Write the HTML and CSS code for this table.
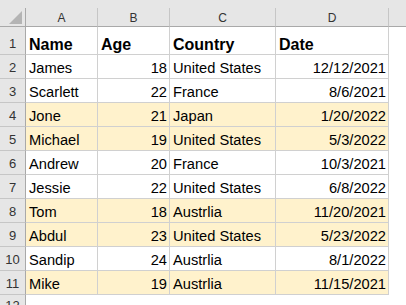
FILE: index.html
```html
<!DOCTYPE html>
<html>
<head>
<meta charset="utf-8">
<link rel="stylesheet" href="styles.css">
</head>
<body>
<div class="sheet">
  <div class="strip"></div>
  <div class="row colhead">
    <div class="corner"><svg width="25" height="18" viewBox="0 0 25 18"><polygon points="22,3 22,16 9,16" fill="#b4b4b4"/></svg></div>
    <div class="ch">A</div>
    <div class="ch">B</div>
    <div class="ch">C</div>
    <div class="ch">D</div>
    <div class="ch rest"></div>
  </div>
  <div class="row first">
    <div class="rh">1</div>
    <div class="c b">Name</div>
    <div class="c b">Age</div>
    <div class="c b">Country</div>
    <div class="c b">Date</div>
    <div class="out"></div>
  </div>
  <div class="row">
    <div class="rh">2</div>
    <div class="c">James</div>
    <div class="c n">18</div>
    <div class="c">United States</div>
    <div class="c n">12/12/2021</div>
    <div class="out"></div>
  </div>
  <div class="row">
    <div class="rh">3</div>
    <div class="c">Scarlett</div>
    <div class="c n">22</div>
    <div class="c">France</div>
    <div class="c n">8/6/2021</div>
    <div class="out"></div>
  </div>
  <div class="row hl">
    <div class="rh">4</div>
    <div class="c">Jone</div>
    <div class="c n">21</div>
    <div class="c">Japan</div>
    <div class="c n">1/20/2022</div>
    <div class="out"></div>
  </div>
  <div class="row hl">
    <div class="rh">5</div>
    <div class="c">Michael</div>
    <div class="c n">19</div>
    <div class="c">United States</div>
    <div class="c n">5/3/2022</div>
    <div class="out"></div>
  </div>
  <div class="row">
    <div class="rh">6</div>
    <div class="c">Andrew</div>
    <div class="c n">20</div>
    <div class="c">France</div>
    <div class="c n">10/3/2021</div>
    <div class="out"></div>
  </div>
  <div class="row">
    <div class="rh">7</div>
    <div class="c">Jessie</div>
    <div class="c n">22</div>
    <div class="c">United States</div>
    <div class="c n">6/8/2022</div>
    <div class="out"></div>
  </div>
  <div class="row hl">
    <div class="rh">8</div>
    <div class="c">Tom</div>
    <div class="c n">18</div>
    <div class="c">Austrlia</div>
    <div class="c n">11/20/2021</div>
    <div class="out"></div>
  </div>
  <div class="row hl">
    <div class="rh">9</div>
    <div class="c">Abdul</div>
    <div class="c n">23</div>
    <div class="c">United States</div>
    <div class="c n">5/23/2022</div>
    <div class="out"></div>
  </div>
  <div class="row">
    <div class="rh">10</div>
    <div class="c">Sandip</div>
    <div class="c n">24</div>
    <div class="c">Austrlia</div>
    <div class="c n">8/1/2022</div>
    <div class="out"></div>
  </div>
  <div class="row hl">
    <div class="rh">11</div>
    <div class="c">Mike</div>
    <div class="c n">19</div>
    <div class="c">Austrlia</div>
    <div class="c n">11/15/2021</div>
    <div class="out"></div>
  </div>
  <div class="row last">
    <div class="rh">12</div>
  </div>
</div>
</body>
</html>
```

FILE: styles.css
```css
* { box-sizing: border-box; }
html, body { margin: 0; padding: 0; background: #fff; }
body { width: 406px; height: 305px; overflow: hidden; font-family: "Liberation Sans", Arial, sans-serif; color: #000; }
.sheet { display: flex; flex-direction: column; }
.strip { height: 8px; background: #e6e6e6; }
.row { display: grid; grid-template-columns: 26px 72px 72px 106px 113px 1fr; height: 24px; }
.row.first { height: 28px; }
.row.colhead { height: 19px; background: #e6e6e6; }
.corner { border-right: 1px solid #a9a9a9; border-bottom: 1px solid #a9a9a9; }
.corner svg { display: block; }
.ch { border-right: 1px solid #c6c6c6; border-bottom: 1px solid #a9a9a9; font-size: 12px; color: #333; display: flex; align-items: center; justify-content: center; line-height: 14px; padding-top: 1px; }
.ch.rest { border-right: none; }
.rh { background: #e6e6e6; border-right: 1px solid #a9a9a9; border-bottom: 1px solid #c6c6c6; font-size: 13px; line-height: 15px; color: #333; display: flex; align-items: flex-end; justify-content: center; padding-bottom: 3px; }
.c { border-right: 1px solid #d0d0d0; border-bottom: 1px solid #d0d0d0; font-size: 14.67px; line-height: 17px; display: flex; align-items: flex-end; padding: 0 2px 1px 3px; white-space: nowrap; overflow: hidden; }
.c.n { justify-content: flex-end; }
.c.b { font-weight: bold; font-size: 16px; line-height: 18px; padding-bottom: 0; }
.hl .c { background: #fff2cc; }
.out { background: #fff; }
.row.last { height: 10px; overflow: hidden; }
.row.last .rh { border-bottom: none; align-items: flex-start; padding-bottom: 0; padding-top: 3px; }
```
